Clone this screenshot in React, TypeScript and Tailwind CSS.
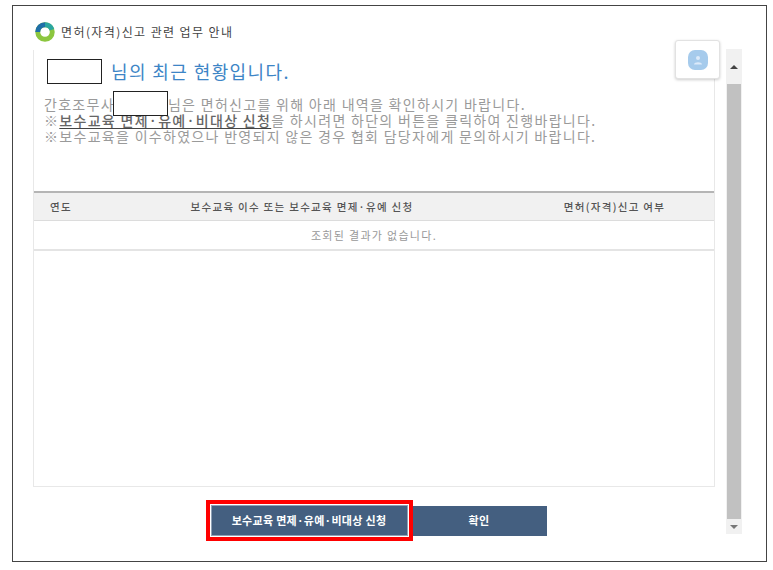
const font = { fontFamily: '"Noto Sans CJK KR", "Noto Sans", sans-serif' };

function Logo() {
  return (
    <svg width="20" height="20" viewBox="0 0 22 22" className="shrink-0">
      <circle cx="11" cy="11" r="8" fill="none" stroke="#8cc63f" strokeWidth="5.4" />
      <path d="M3 11 A8 8 0 0 1 11 3" fill="none" stroke="#1f6fa8" strokeWidth="5.4" />
      <path d="M11 3 A8 8 0 0 1 18.6 8.5" fill="none" stroke="#2ba6a0" strokeWidth="5.4" />
    </svg>
  );
}

function Scrollbar() {
  return (
    <div className="w-[16px] h-[485px] ml-[11px] mt-[-1px] bg-[#f1f1f1] flex flex-col items-center shrink-0">
      <div className="h-[35px] flex items-center justify-center">
        <div className="w-0 h-0 border-x-[4px] border-x-transparent border-b-[4px] border-b-[#444]" />
      </div>
      <div className="w-[14px] flex-1 bg-[#c1c1c1]" />
      <div className="h-[15px] flex items-center justify-center">
        <div className="w-0 h-0 border-x-[4px] border-x-transparent border-t-[4px] border-t-[#777]" />
      </div>
    </div>
  );
}

export default function App() {
  return (
    <div className="w-[773px] h-[570px] bg-white pt-[5px] pl-[12px] overflow-hidden" style={font}>
      <div className="relative w-[755px] h-[557px] border border-[#444] bg-white">
        <div className="h-[44px] pl-[22px] pt-[8px] flex items-center gap-[6px]">
          <Logo />
          <span className="text-[12px] text-[#444] tracking-[1.4px]">면허(자격)신고 관련 업무 안내</span>
        </div>
        <div className="flex pl-[20px]">
          <div className="w-[682px] shrink-0">
            <div className="h-[437px] border-x border-b border-[#e8e8e8]">
              <div className="h-[141px] pl-[10px]">
                <div className="flex items-center h-[42px] pl-[3px]">
                  <div className="w-[55px] h-[25px] border border-[#222] bg-white mr-[9px]" />
                  <span className="text-[18px] text-[#3d85c6] tracking-[1.4px]">님의 최근 현황입니다.</span>
                </div>
                <div className="text-[14px] leading-[16px] text-[#9a9a9a] pt-[4px] tracking-[1.3px] whitespace-nowrap">
                  <p>
                    간호조무사
                    <span className="relative inline-block w-[55px] h-[25px] -ml-[2px] -mt-[15px] -mb-[6px] border border-[#222] bg-white" />
                    님은 면허신고를 위해 아래 내역을 확인하시기 바랍니다.
                  </p>
                  <p>
                    ※<span className="text-[#666] font-medium underline underline-offset-2 decoration-[#444]">보수교육 면제·유예·비대상 신청</span>을 하시려면 하단의 버튼을 클릭하여 진행바랍니다.
                  </p>
                  <p>※보수교육을 이수하였으나 반영되지 않은 경우 협회 담당자에게 문의하시기 바랍니다.</p>
                </div>
              </div>
              <div className="h-[30px] bg-[#f1f1f1] border-t-2 border-b border-t-[#b5b5b5] border-b-[#dcdcdc] flex items-center text-[10.5px] font-medium text-[#555] tracking-[1.3px]">
                <div className="w-[100px] pl-[16px]">연도</div>
                <div className="w-[336px] text-center">보수교육 이수 또는 보수교육 면제·유예 신청</div>
                <div className="flex-1 text-center pl-[45px]">면허(자격)신고 여부</div>
              </div>
              <div className="h-[30px] border-b-2 border-[#e4e4e4] flex items-center justify-center text-[11px] text-[#999] tracking-[1.3px]">
                조회된 결과가 없습니다.
              </div>
            </div>
            <div className="flex justify-center pt-[18px]">
              <div className="flex ml-[4px] items-center">
                <div className="relative z-10 border-[4px] border-[#ff0000] bg-white p-[1px] my-[-5px] mr-[-1px]">
                  <button className="w-[197px] h-[31px] bg-[#445f80] border border-[#8fa0b5] text-white text-[11px] font-bold tracking-[0.3px]">
                    보수교육 면제·유예·비대상 신청
                  </button>
                </div>
                <button className="w-[135px] h-[30px] bg-[#445f80] text-white text-[11px] font-bold tracking-[0.3px]">확인</button>
              </div>
            </div>
          </div>
          <Scrollbar />
        </div>
        <div className="absolute left-[662px] top-[34px] w-[45px] h-[39px] bg-white border border-[#e2e2e2] rounded-[3px] shadow-[0_1px_3px_rgba(0,0,0,0.2)] flex items-center justify-center">
          <div className="w-[20px] h-[20px] rounded-[7px] bg-[#a6cbec] flex items-center justify-center">
            <svg width="10" height="10" viewBox="0 0 10 10">
              <circle cx="5" cy="3" r="2" fill="#dceafa" />
              <path d="M1 9.5 C1 6.5 9 6.5 9 9.5 Z" fill="#dceafa" />
            </svg>
          </div>
        </div>
      </div>
    </div>
  );
}
